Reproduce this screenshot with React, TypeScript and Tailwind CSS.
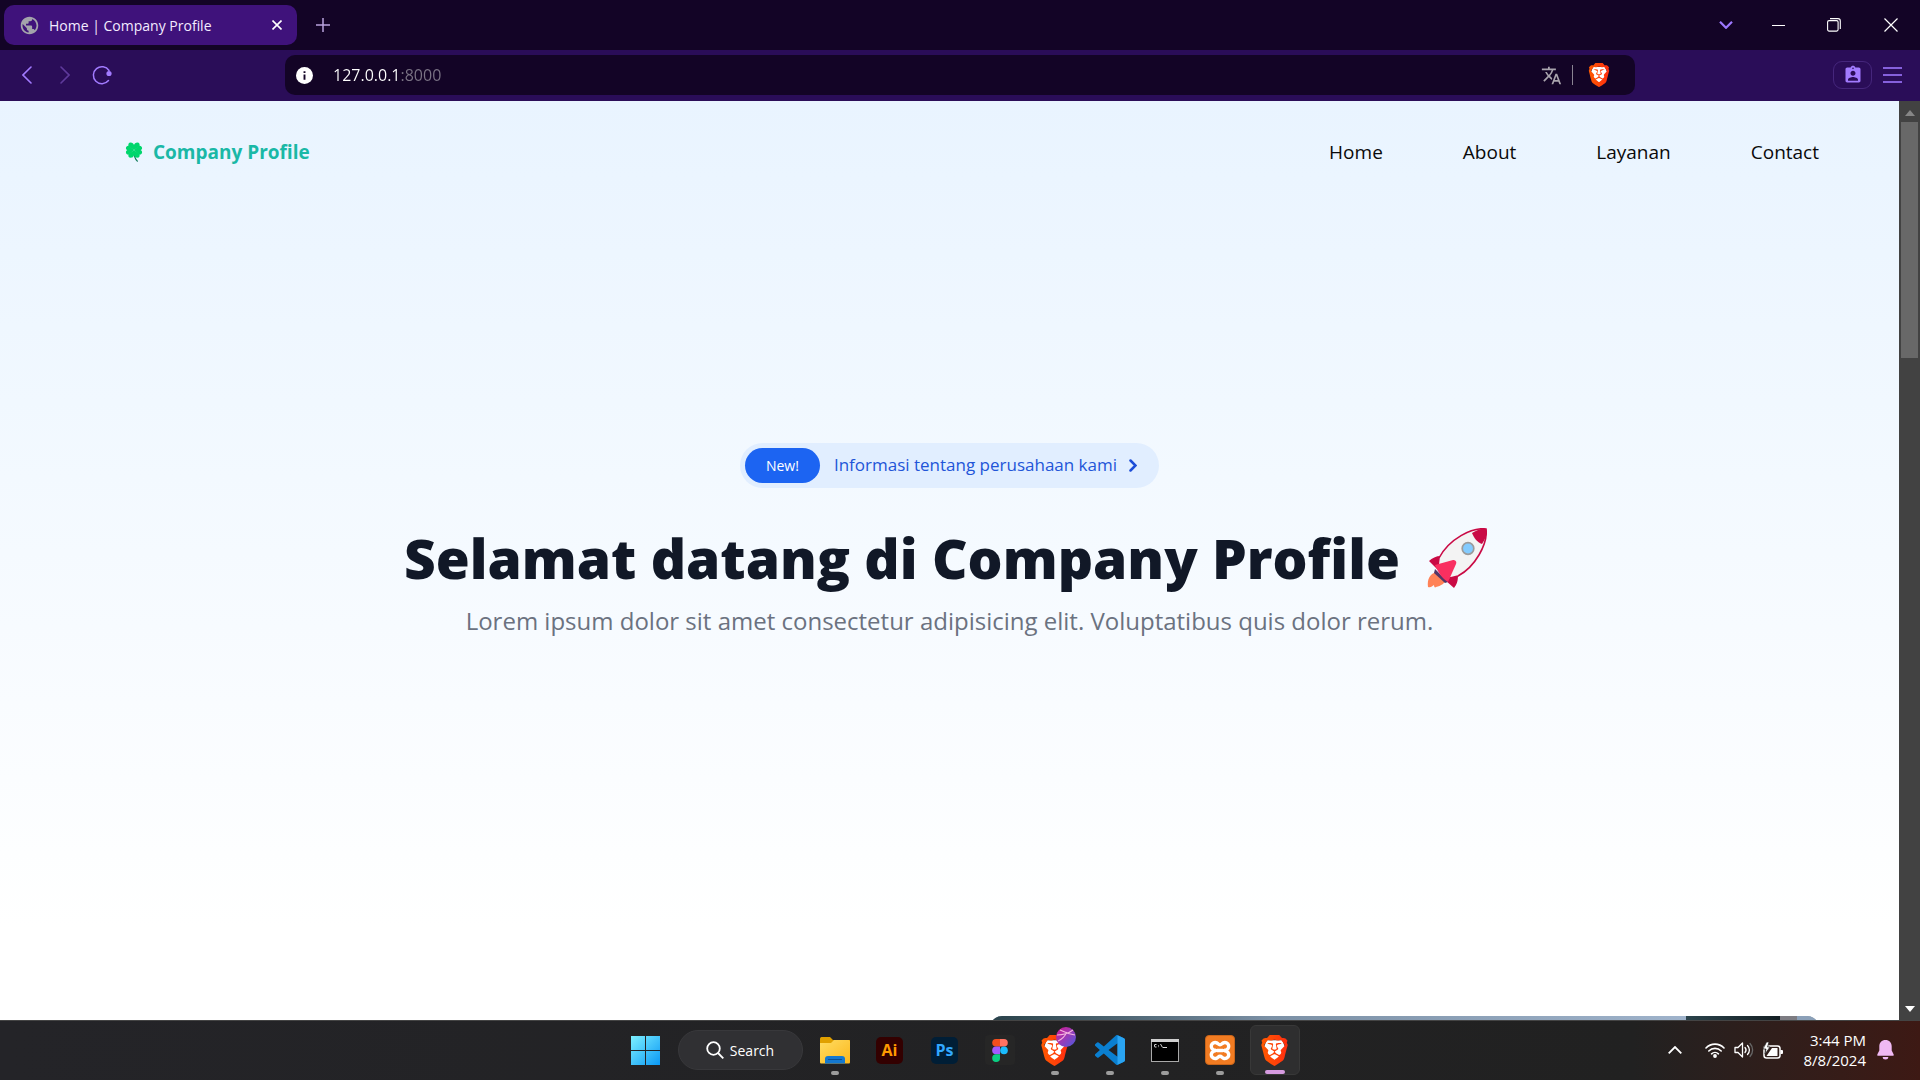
import type { ReactNode } from 'react';
import { MdPublic, MdTranslate, MdAssignmentInd } from 'react-icons/md';
import { SiBrave } from 'react-icons/si';

function BraveLogo({ id, className }: { id: string; className: string }) {
  return (
    <svg viewBox="0 0 24 24" className={className} aria-hidden="true">
      <defs>
        <linearGradient id={id} x1="0" x2="1">
          <stop offset="0" stopColor="#ff5a00" />
          <stop offset="1" stopColor="#ff2d10" />
        </linearGradient>
      </defs>
      <path d="M6 4h12l2 5-2 7-6 5-6-5-2-7z" fill="#fff" />
      <SiBrave size={24} fill={`url(#${id})`} />
    </svg>
  );
}

function Clover() {
  return (
    <svg viewBox="0 0 20 24" className="h-5 w-[18px]" aria-hidden="true">
      <path d="M10 12c0 5 1.500 8.500 4 11" stroke="#0f7a5a" strokeWidth="1.500" fill="none" strokeLinecap="round" />
      <g fill="#00d66c">
        <path d="M10 9.500L3.600 5.500C2.500 3 3.500.5 6 .5c2 0 3.500 1 4 3 .5-2 2-3 4-3 2.500 0 3.500 2.500 2.400 5z" />
        <path d="M10 9.500l-6.400 5c-1 2.500 0 4.500 2.400 4.500 2 0 3.500-1 4-3 .5 2 2 3 4 3 2.400 0 3.400-2 2.400-4.500z" />
        <path d="M10 9.500L4 4.500C2 4 .3 5.500.3 7.300c0 1.200.5 2 1.700 2.500-1.200.5-1.700 1.300-1.700 2.500 0 1.800 1.700 3.300 3.700 2.800z" />
        <path d="M10 9.500l6-5c2-.5 3.700 1 3.700 2.800 0 1.200-.5 2-1.700 2.500 1.200.5 1.700 1.300 1.700 2.500 0 1.800-1.700 3.300-3.700 2.800z" />
      </g>
    </svg>
  );
}

function Rocket() {
  return (
    <svg viewBox="0 0 60 60" className="h-[60px] w-[60px] shrink-0" role="img" aria-label="Rocket">
      <path d="M9 44c-6 2-9 7-8 15 3 1 4-1 6-2 0 2 1 3 2 2 5-1 9-4 11-8z" fill="#ff8257" />
      <path d="M14 28C9 28 5 30 2 33l8 8zM31 47c0 6-1 9-4 13l-9-8z" fill="#c90a45" />
      <path d="M59 1C45-1 22 11 12 30l-1 8 12 12 8-2C48 39 61 16 59 1z" fill="#f3f3f3" stroke="#c90a45" strokeWidth="1.600" />
      <path d="M45 5c6-4 11-5 14-4 2 3 0 9-4 15-5-2-8-6-10-11z" fill="#c90a45" />
      <path d="M8 41l13 13-3 1L7 45z" fill="#533566" />
      <path d="M8 37l18-5c2 0 4 1 3 4l-8 18C16 51 11 45 8 37z" fill="#f92f60" />
      <circle cx="41" cy="20.500" r="5.800" fill="#83cbff" stroke="#9b9b9b" strokeWidth="1.700" />
    </svg>
  );
}

function WindowsLogo() {
  return (
    <svg viewBox="0 0 29 29" className="size-[29px]" aria-hidden="true">
      <defs>
        <linearGradient id="win" x1="0" y1="0" x2="1" y2="1">
          <stop offset="0" stopColor="#7df0ff" />
          <stop offset="1" stopColor="#0a98f5" />
        </linearGradient>
      </defs>
      <path d="M0 0h14v14H0zM15 0h14v14H15zM0 15h14v14H0zM15 15h14v14H15z" fill="url(#win)" />
    </svg>
  );
}

function Folder() {
  return (
    <svg viewBox="0 0 30 27" className="h-[27px] w-[30px]" aria-hidden="true">
      <defs>
        <linearGradient id="fold" x1="0" y1="0" x2="1" y2="1">
          <stop offset="0" stopColor="#ffdc62" />
          <stop offset="1" stopColor="#fcb81c" />
        </linearGradient>
      </defs>
      <path d="M0 2c0-1 .5-2 1.500-2H10l3 3h17v9H0z" fill="#e0a000" />
      <path d="M0 6h11l3-3h14c1 0 2 .5 2 1.500V25c0 1-.5 1.500-1.500 1.500h-27C.5 26.500 0 26 0 25z" fill="url(#fold)" />
      <path d="M5 26.500V22c0-2 1-3 3-3h14c2 0 3 1 3 3v4.500z" fill="#1478cf" />
      <path d="M8.500 22.500h13" stroke="#0a4f94" strokeWidth="1.200" strokeLinecap="round" />
    </svg>
  );
}

function Figma() {
  return (
    <span className="flex size-[30px] items-center justify-center rounded bg-[#262626]">
      <svg viewBox="0 0 16 23" className="h-[23px] w-4" aria-hidden="true">
        <path d="M4 0h4v7.600H4A3.800 3.800 0 0 1 4 0z" fill="#f24e1e" />
        <path d="M8 0h4a3.800 3.800 0 0 1 0 7.600H8z" fill="#ff7262" />
        <path d="M4 7.600h4v7.600H4a3.800 3.800 0 0 1 0-7.600z" fill="#a259ff" />
        <circle cx="12" cy="11.400" r="3.800" fill="#1abcfe" />
        <path d="M4 15.200h4V19a3.900 3.900 0 1 1-4-3.800z" fill="#0acf83" />
      </svg>
    </span>
  );
}

function VsCode() {
  return (
    <svg viewBox="0 0 24 24" className="size-[30px]" aria-hidden="true">
      <path
        d="M23.150 2.587L18.210.210a1.494 1.494 0 0 0-1.705.290l-9.460 8.630-4.120-3.128a.999.999 0 0 0-1.276.057L.327 7.261A1 1 0 0 0 .326 8.740L3.899 12 .326 15.260a1 1 0 0 0 .001 1.479L1.650 17.940a.999.999 0 0 0 1.276.057l4.120-3.128 9.460 8.630a1.492 1.492 0 0 0 1.704.290l4.942-2.377A1.500 1.500 0 0 0 24 20.060V3.939a1.500 1.500 0 0 0-.850-1.352zm-5.146 14.861L10.826 12l7.178-5.448v10.896z"
        fill="#0a7fd0"
      />
      <path d="M18 .2l5.200 2.400c.5.300.8.800.8 1.400v16c0 .6-.3 1.100-.8 1.400L18 23.800z" fill="#2aa4f2" />
    </svg>
  );
}

function Terminal() {
  return (
    <svg viewBox="0 0 28 23" className="h-[23px] w-7" aria-hidden="true">
      <rect x=".5" y=".5" width="27" height="22" fill="#000" stroke="#a9a9a9" />
      <path d="M0 0h28v3H0z" fill="#cfcfcf" />
      <path d="M5.500 5.500H4a.5.500 0 0 0-.5.500v1.500a.5.500 0 0 0 .5.500h1.500M7.500 6v.6M7.500 7.500v.6M9.500 5l2 3.500M12 8.500h4" stroke="#d8d8d8" fill="none" />
    </svg>
  );
}

function Xampp() {
  return (
    <span className="flex size-[30px] items-center justify-center rounded-sm border border-[#c9651a] bg-[#f27c22]">
      <svg viewBox="0 0 24 22" className="h-[21px] w-6" aria-hidden="true">
        <g fill="none" stroke="#fff" strokeWidth="3.600" strokeLinecap="round">
          <path d="M7 11C3.500 10 2.500 7.500 3 5.500 3.600 3 6.500 2 8.500 3c1.500.8 2 2 3.500 2s2-1.200 3.500-2c2-1 4.900 0 5.500 2.500.5 2-.5 4.500-4 5.500" />
          <path d="M7 11c-3.500 1-4.500 3.500-4 5.500.6 2.500 3.500 3.500 5.500 2.500 1.500-.8 2-2 3.500-2s2 1.200 3.500 2c2 1 4.900 0 5.500-2.500.5-2-.5-4.500-4-5.500" />
          <path d="M9 11h6" />
        </g>
      </svg>
    </span>
  );
}

function BraveWithBadge() {
  return (
    <span className="relative">
      <BraveLogo id="brave-b" className="size-[31px]" />
      <svg viewBox="0 0 20 20" className="absolute -top-2 -right-1.5 size-5" aria-hidden="true">
        <defs>
          <linearGradient id="ball" x1="0" y1="0" x2="1" y2="1">
            <stop offset="0" stopColor="#d3188f" />
            <stop offset=".5" stopColor="#9a3bb8" />
            <stop offset="1" stopColor="#4a5be0" />
          </linearGradient>
        </defs>
        <circle cx="10" cy="10" r="10" fill="url(#ball)" />
        <path d="M1 8c7 0 12-2 16-5M4 3c4 2 8 4 15 5M2 14c5-2 7-5 9-9" stroke="#f4b3df" strokeWidth="1.100" fill="none" />
      </svg>
    </span>
  );
}

function TaskItem({ label, running, active, children }: { label: string; running?: boolean; active?: boolean; children: ReactNode }) {
  return (
    <button
      aria-label={label}
      className={
        active
          ? 'relative flex size-[50px] items-center justify-center rounded-md border border-[#383838] bg-[#2e2e2f]'
          : 'relative flex size-[50px] items-center justify-center'
      }
    >
      {children}
      {active && <span className="absolute bottom-0 h-1 w-5 rounded-full bg-[#d69be0]" />}
      {running && <span className="absolute bottom-0 h-1 w-2 rounded-full bg-[#9c9c9c]" />}
    </button>
  );
}

function TabBar() {
  return (
    <div className="flex h-[50px] items-center bg-[#130426] pl-1">
      <div className="flex h-10 w-[293px] items-center rounded-[10px] bg-[#3f127b] pr-[10px] pl-[15px]">
        <MdPublic size={21} className="text-[#a3a3ab]" />
        <span className="ml-[9px] flex-1 text-[14px] text-[#f3ecff]">Home | Company Profile</span>
        <button aria-label="Close tab" className="flex size-5 items-center justify-center">
          <svg viewBox="0 0 10 10" className="size-[10px]" stroke="#fff" strokeWidth="1.600" aria-hidden="true">
            <path d="M.5.5l9 9M9.500.5l-9 9" />
          </svg>
        </button>
      </div>
      <button aria-label="New tab" className="ml-4 flex size-5 items-center justify-center">
        <svg viewBox="0 0 14 14" className="size-[14px]" stroke="#b9a3dd" strokeWidth="1.500" aria-hidden="true">
          <path d="M7 0v14M0 7h14" />
        </svg>
      </button>
      <div className="ml-auto flex h-full items-center">
        <button aria-label="Search tabs" className="flex w-10 justify-center">
          <svg viewBox="0 0 14 8" className="h-2 w-[14px]" fill="none" stroke="#9d78ff" strokeWidth="2.200" aria-hidden="true">
            <path d="M1 .8l6 6 6-6" />
          </svg>
        </button>
        <button aria-label="Minimize" className="ml-1 flex w-[56px] justify-center">
          <span className="h-px w-[13px] bg-white" />
        </button>
        <button aria-label="Restore" className="flex w-[56px] justify-center">
          <svg viewBox="0 0 14 14" className="size-[14px]" fill="none" stroke="#fff" strokeWidth="1.100" aria-hidden="true">
            <rect x=".6" y="2.600" width="10.500" height="10.500" rx="1.500" />
            <path d="M3 .6h8a2.300 2.300 0 0 1 2.300 2.300v8" />
          </svg>
        </button>
        <button aria-label="Close window" className="flex w-[58px] justify-center">
          <svg viewBox="0 0 14 14" className="size-[14px]" stroke="#fff" strokeWidth="1.200" aria-hidden="true">
            <path d="M.5.5l13 13M13.500.5l-13 13" />
          </svg>
        </button>
      </div>
    </div>
  );
}

function Toolbar() {
  return (
    <div className="flex h-[51px] items-center bg-[#2a0d58] pb-px">
      <div className="flex w-[285px] shrink-0 items-center pl-[22px]">
        <button aria-label="Back" className="flex w-3">
          <svg viewBox="0 0 10 18" className="h-[18px] w-[10px]" fill="none" stroke="#a27bff" strokeWidth="1.600" strokeLinecap="round" aria-hidden="true">
            <path d="M9 1L1 9l8 8" />
          </svg>
        </button>
        <button aria-label="Forward" disabled className="ml-[26px] flex w-3">
          <svg viewBox="0 0 10 18" className="h-[18px] w-[10px]" fill="none" stroke="#5f3a9c" strokeWidth="1.600" strokeLinecap="round" aria-hidden="true">
            <path d="M1 1l8 8-8 8" />
          </svg>
        </button>
        <button aria-label="Reload" className="ml-5 flex">
          <svg viewBox="0 0 20 20" className="size-5" aria-hidden="true">
            <path d="M16.500 15.500A8.500 8.500 0 1 1 17 5.500" fill="none" stroke="#a27bff" strokeWidth="1.500" strokeLinecap="round" />
            <circle cx="17" cy="8.500" r="2.600" fill="#a27bff" />
          </svg>
        </button>
      </div>
      <div className="flex h-10 min-w-0 flex-1 items-center rounded-[10px] bg-[#130426] pr-6 pl-[11px]">
        <svg viewBox="0 0 16 16" className="size-[17px]" aria-hidden="true">
          <circle cx="8" cy="8" r="8" fill="#fff" />
          <path d="M7.100 7h1.800v5H7.100zM7.100 4h1.800v1.700H7.100z" fill="#130426" />
        </svg>
        <input
          aria-label="Address"
          defaultValue="127.0.0.1:8000"
          className="ml-5 min-w-0 flex-1 bg-linear-to-r from-white from-[67px] to-[#7b7485] to-[67px] bg-clip-text text-base text-transparent outline-none"
        />
        <button aria-label="Translate">
          <MdTranslate size={21} className="text-[#a9a4ad]" />
        </button>
        <span className="mx-[10px] h-5 w-px bg-[#8a8492]" />
        <button aria-label="Brave Shields" className="ml-1">
          <BraveLogo id="brave-a" className="size-6" />
        </button>
      </div>
      <div className="flex w-[285px] shrink-0 items-center justify-end gap-[11px] pr-[18px]">
        <button aria-label="Profile" className="flex h-7 w-[39px] items-center justify-center rounded-[9px] border border-[#45267c]">
          <MdAssignmentInd size={20} className="text-[#a27bff]" />
        </button>
        <button aria-label="Menu" className="flex w-[19px] flex-col gap-[5px]">
          <span className="h-[2px] bg-[#8560dc]" />
          <span className="h-[2px] bg-[#8560dc]" />
          <span className="h-[2px] bg-[#8560dc]" />
        </button>
      </div>
    </div>
  );
}

const links = ['Home', 'About', 'Layanan', 'Contact'];

function Page() {
  return (
    <main className="flex min-w-0 flex-1 flex-col bg-linear-to-b from-[#e9f4ff] to-white to-90%">
      <header className="flex h-[102px] items-center justify-between pr-20 pl-[125px]">
        <a href="#home" className="flex items-center gap-[10px] text-[19px] font-bold text-[#1ab8a6]">
          <Clover />
          Company Profile
        </a>
        <nav className="flex gap-20 text-[19px] text-[#0a0a0a]">
          {links.map((link) => (
            <a key={link} href={`#${link.toLowerCase()}`}>
              {link}
            </a>
          ))}
        </nav>
      </header>
      <section className="flex flex-1 flex-col items-center justify-center px-8 pb-[136px]">
        <a href="#info" className="flex h-[45px] items-center rounded-full bg-[#e1eeff] pr-[22px] pl-[5px] text-[17px] font-medium text-[#2255d8]">
          <span className="mr-[14px] flex h-[35px] items-center rounded-full bg-[#1c64f2] px-[21px] text-[14px] text-white">New!</span>
          Informasi tentang perusahaan kami
          <svg viewBox="0 0 8 13" className="ml-3 h-[13px] w-2" fill="none" stroke="#1d4ed8" strokeWidth="2.500" strokeLinecap="round" aria-hidden="true">
            <path d="M1.500 1.500l5 5-5 5" />
          </svg>
        </a>
        <h1 className="mt-10 flex items-center gap-[27px] pr-2 text-[55px] leading-[60px] font-extrabold text-[#111827]">
          Selamat datang di Company Profile
          <Rocket />
        </h1>
        <p className="mt-[13px] text-[24px] leading-[40px] text-[#6b7280]">Lorem ipsum dolor sit amet consectetur adipisicing elit. Voluptatibus quis dolor rerum.</p>
      </section>
      <section aria-label="Photo" className="flex h-1 shrink-0 justify-end overflow-hidden pr-20">
        <div className="flex h-40 w-[829px] overflow-hidden rounded-xl bg-[#7e92a5]">
          <div className="flex-1 bg-linear-to-r from-[#29424a] via-[#7b90a5] via-40% to-[#9fb3cb]" />
          <div className="w-[94px] bg-linear-to-r from-[#2b444c] to-[#141f24]" />
          <div className="w-[17px] bg-[#7d7c82]" />
          <div className="w-[22px] bg-[#8ba0b8]" />
        </div>
      </section>
    </main>
  );
}

function Scrollbar() {
  return (
    <div className="flex w-[21px] shrink-0 flex-col items-center justify-between bg-[#424242]" aria-hidden="true">
      <div className="flex flex-col items-center">
        <div className="flex h-[21px] items-center pt-[3px]">
          <svg viewBox="0 0 10 6" className="h-[6px] w-[10px]">
            <path d="M5 0l5 6H0z" fill="#868686" />
          </svg>
        </div>
        <div className="h-[236px] w-[17px] bg-[#686868]" />
      </div>
      <svg viewBox="0 0 10 6" className="mb-2 h-[6px] w-[10px]">
        <path d="M0 0h10L5 6z" fill="#fff" />
      </svg>
    </div>
  );
}

function Taskbar() {
  return (
    <footer className="grid h-[60px] grid-cols-[1fr_auto_1fr] items-center border-t border-[#444] bg-linear-to-r from-[#242428] via-[#212121] via-85% to-[#3d1914] pb-px">
      <div />
      <div className="flex items-center gap-[5px]">
        <TaskItem label="Start">
          <WindowsLogo />
        </TaskItem>
        <button className="mx-[2px] flex h-10 w-[125px] items-center justify-center gap-[6px] rounded-full border border-[#38383b] bg-[#303033] text-[14px] text-white">
          <svg viewBox="0 0 18 18" className="size-[18px]" fill="none" stroke="#fff" strokeWidth="1.800" aria-hidden="true">
            <circle cx="7.500" cy="7.500" r="6.300" />
            <path d="M12 12l5.300 5.300" />
          </svg>
          Search
        </button>
        <TaskItem label="File Explorer" running>
          <Folder />
        </TaskItem>
        <TaskItem label="Illustrator">
          <span className="flex size-[27px] items-center justify-center rounded-[5px] bg-[#330000] text-[16px] font-bold text-[#ff9a00]">Ai</span>
        </TaskItem>
        <TaskItem label="Photoshop">
          <span className="flex size-[27px] items-center justify-center rounded-[5px] bg-[#001e36] text-[16px] font-bold text-[#31a8ff]">Ps</span>
        </TaskItem>
        <TaskItem label="Figma">
          <Figma />
        </TaskItem>
        <TaskItem label="Brave, second profile" running>
          <BraveWithBadge />
        </TaskItem>
        <TaskItem label="Visual Studio Code" running>
          <VsCode />
        </TaskItem>
        <TaskItem label="Command Prompt" running>
          <Terminal />
        </TaskItem>
        <TaskItem label="XAMPP" running>
          <Xampp />
        </TaskItem>
        <TaskItem label="Brave" active>
          <BraveLogo id="brave-c" className="size-[31px]" />
        </TaskItem>
      </div>
      <div className="flex items-center justify-end pr-[26px] text-white">
        <button aria-label="Hidden icons" className="mr-[23px]">
          <svg viewBox="0 0 14 8" className="h-2 w-[14px]" fill="none" stroke="#fff" strokeWidth="1.800" aria-hidden="true">
            <path d="M.7 7.300L7 1l6.300 6.300" />
          </svg>
        </button>
        <button aria-label="Network, volume and battery" className="flex items-center gap-[9px]">
          <svg viewBox="0 0 20 16" className="h-4 w-5" fill="none" stroke="#fff" strokeWidth="1.600" strokeLinecap="round" aria-hidden="true">
            <path d="M1 6a12.500 12.500 0 0 1 18 0M3.800 9a8.700 8.700 0 0 1 12.400 0M6.600 11.800a5 5 0 0 1 6.800 0" />
            <circle cx="10" cy="14" r="1.100" fill="#fff" />
          </svg>
          <svg viewBox="0 0 20 18" className="h-[18px] w-5" fill="none" stroke="#fff" strokeWidth="1.300" strokeLinecap="round" strokeLinejoin="round" aria-hidden="true">
            <path d="M1 6.500h3L8.500 2v14L4 11.500H1zM11 6.500c1.300 1.500 1.300 3.500 0 5M13.500 4.500c2.500 2.600 2.500 6.400 0 9" />
            <path d="M16 2.500c3.500 3.800 3.500 9.200 0 13" stroke="#666" />
          </svg>
          <svg viewBox="0 0 20 17" className="h-[17px] w-5" aria-hidden="true">
            <rect x="1" y="4" width="16" height="12" rx="2.500" fill="none" stroke="#fff" strokeWidth="1.500" />
            <path d="M17.500 8h1.500a1 1 0 0 1 1 1v2a1 1 0 0 1-1 1h-1.500z" fill="#fff" />
            <path d="M9 6h5.500v8H3.500z" fill="#fff" />
            <path d="M3.500 0L0 7h3l-1 5 5-7H4.500L6 0z" fill="#fff" stroke="#252222" strokeWidth=".7" />
          </svg>
        </button>
        <button className="ml-5 w-[63px] text-right text-[15px] leading-5 whitespace-nowrap">
          3:44 PM
          <br />
          8/8/2024
        </button>
        <button aria-label="Notifications" className="ml-[11px]">
          <svg viewBox="0 0 17 20" className="h-5 w-[17px]" fill="#f0b9f3" aria-hidden="true">
            <path d="M8.500 0C4.800 0 2.300 2.700 2.300 6.200v4.300L.4 14.200c-.4.900 0 1.600.9 1.600h14.400c.9 0 1.300-.7.900-1.600l-1.900-3.700V6.200C14.700 2.700 12.200 0 8.500 0z" />
            <path d="M5.700 17h5.600a2.800 2.500 0 0 1-5.600 0z" />
          </svg>
        </button>
      </div>
    </footer>
  );
}

export default function App() {
  return (
    <div className="flex h-screen flex-col overflow-hidden font-['Open_Sans','Noto_Sans',sans-serif]">
      <TabBar />
      <Toolbar />
      <div className="flex min-h-0 flex-1">
        <Page />
        <Scrollbar />
      </div>
      <Taskbar />
    </div>
  );
}
